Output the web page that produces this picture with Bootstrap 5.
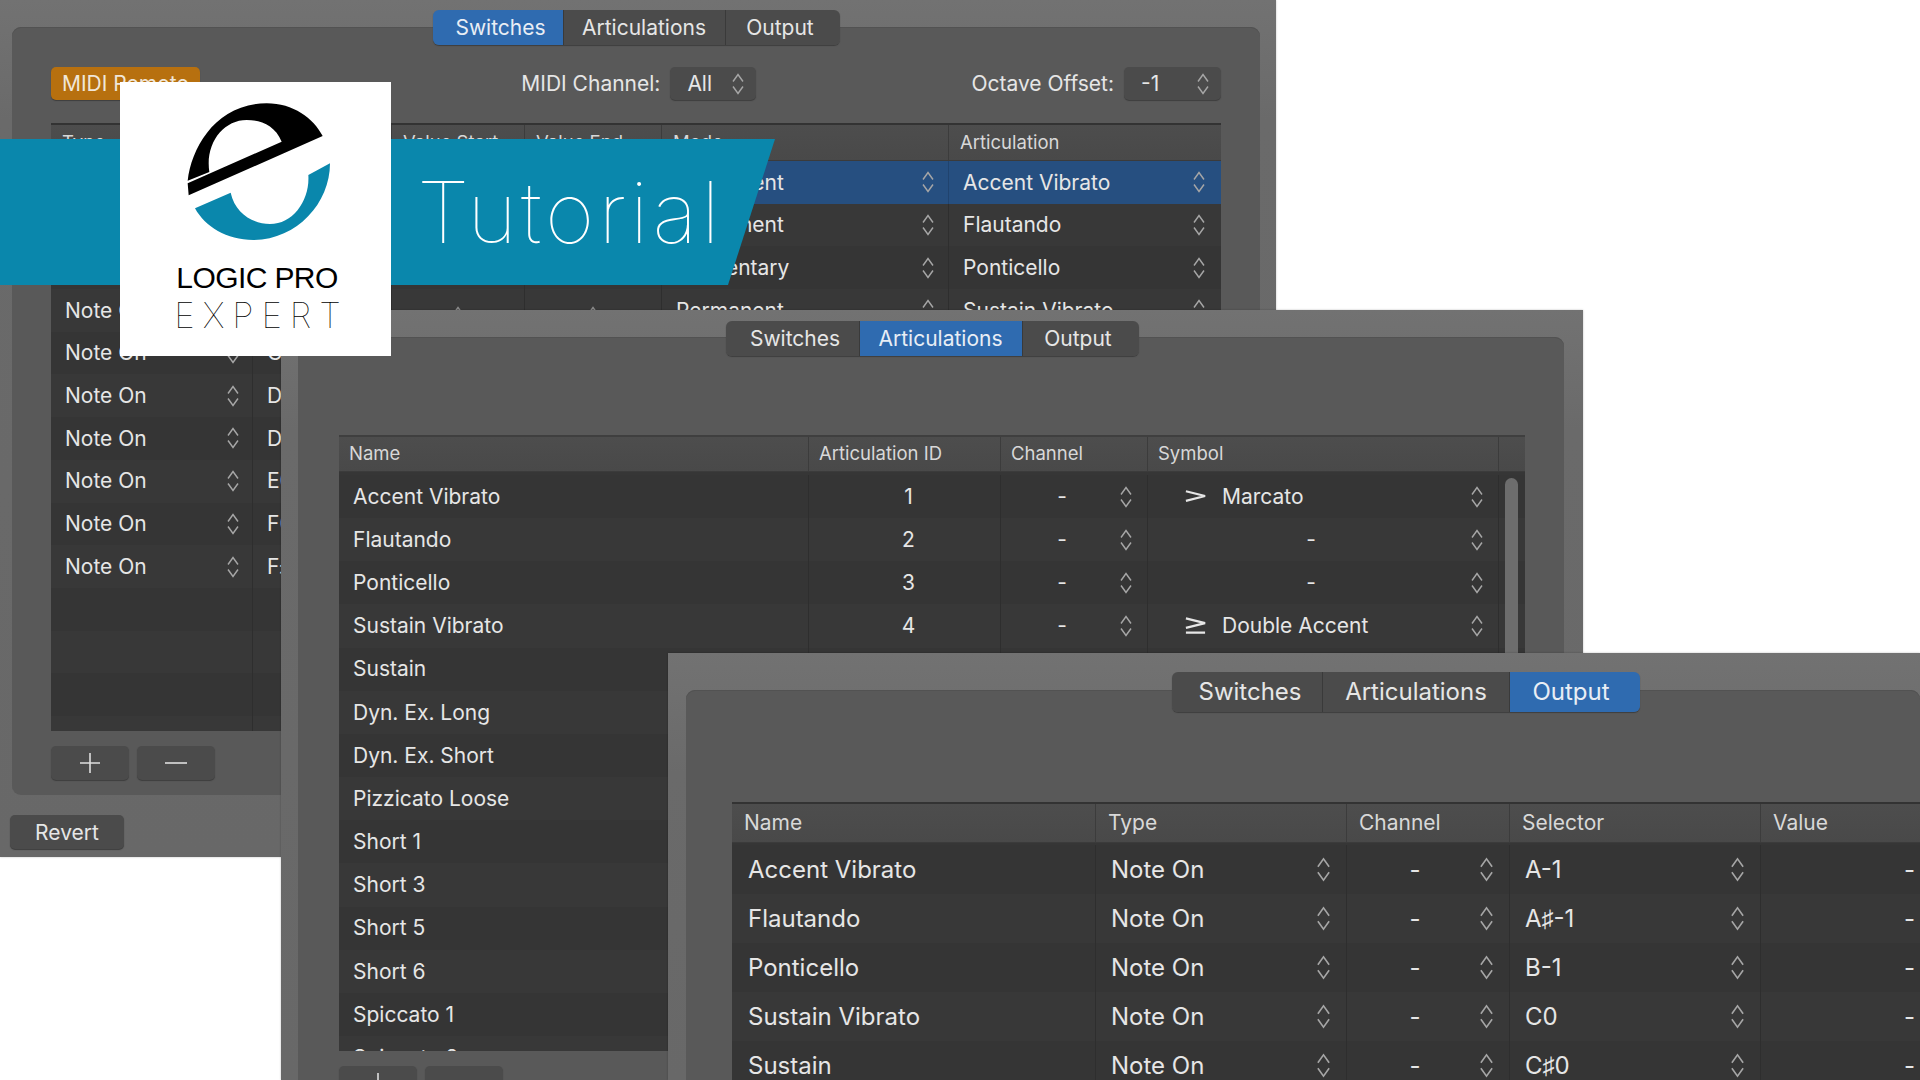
<!DOCTYPE html>
<html lang="en">
<head>
<meta charset="utf-8">
<title>Logic Pro Expert Tutorial</title>
<link href="https://cdn.jsdelivr.net/npm/bootstrap@5.3.0/dist/css/bootstrap.min.css" rel="stylesheet">
<style>
html,body{margin:0;height:100%;background:#fff;overflow:hidden}
body{font-family:Inter,"Liberation Sans",sans-serif;color:#e6e6e6}
.stage{position:relative;width:1920px;height:1080px;overflow:hidden}
.win{position:absolute;overflow:hidden;background:linear-gradient(#727272,#6a6a6a 120px,#686868);box-shadow:0 0 2px rgba(0,0,0,.25)}
.win-a{left:0;top:0;width:1276px;height:857px;z-index:1;padding:27px 16px 0 12px}
.win-b{left:281px;top:310px;width:1302px;height:770px;z-index:2;padding:27px 19px 0 17px}
.win-c{left:668px;top:653px;width:1252px;height:427px;z-index:3;padding:37px 0 0 18px}
.pane{background:#595959;border-radius:9px 9px 0 0;box-shadow:inset 0 1px 0 #525252}
.win-a .pane{height:768px;border-radius:9px;padding:0 39px}
.win-b .pane{height:800px;padding:0 39px 0 41px}
.win-c .pane{height:480px;padding:0 0 0 46px}
.tabset{box-shadow:0 1px 1px #3d3d3d;border-radius:6px}
.tabset .btn{background:#4b4b4b;border:0;border-right:1px solid #3a3a3a;color:#e6e6e6;font-size:21px;line-height:1;border-radius:0;padding:0;height:35px;display:flex;align-items:center;justify-content:center}
.btn-group.tabset>.btn+.btn{margin-left:0}
.tabset .btn:first-child{border-radius:6px 0 0 6px;padding-left:6px}
.tabset .btn:last-child{border-radius:0 6px 6px 0;border-right:0;padding-right:5px}
.tabset .btn.on{background:#2f6bb0;color:#e9eef5}
.tabset-a{margin-top:-17px;margin-bottom:22px}
.tabset-a .btn:nth-child(1){width:131px}.tabset-a .btn:nth-child(2){width:162px}.tabset-a .btn:nth-child(3){width:114px}
.tabset-b{margin-top:-16px;margin-bottom:79px}
.tabset-b .btn:nth-child(1){width:134px}.tabset-b .btn:nth-child(2){width:163px}.tabset-b .btn:nth-child(3){width:116px}
.tabset-c{margin:-18px 0 90px 440px}
.tabset-c .btn{height:40px;font-size:24px}
.tabset-c .btn:nth-child(1){width:151px}.tabset-c .btn:nth-child(2){width:187px}.tabset-c .btn:nth-child(3){width:130px}
.tabset-c .btn:last-child{padding-right:8px}
.control-row{height:33px;margin-bottom:23px}
.remote-btn{width:149px;height:33px;background:#b7700f;color:#f0e6d8;border:0;border-radius:5px;font-size:21px;padding:0 0 0 11px;text-align:left;line-height:1;box-shadow:0 1px 1px #3d3d3d}
.ctl-label{font-size:21px;margin-right:10px}
.pick{height:33px;background:#4b4b4b;color:#e6e6e6;border:0;border-radius:5px;font-size:21px;padding:0 11px 0 17px;line-height:1;box-shadow:0 1px 1px #3d3d3d;display:flex;align-items:center;justify-content:space-between}
.pick-ch{width:86px;margin-right:215px}
.pick-oct{width:97px}
.grid-a{width:1170px;height:608px;background:#363636;border-top:2px solid #333}
.grid-b{width:1186px;height:616px;background:#363636;border-top:2px solid #3f3f3f}
.grid-c{width:1300px;height:400px;background:#363636;border-top:2px solid #333}
.head,.line{display:grid}
.head{background:linear-gradient(#4d4d4d,#494949);color:#d8d8d8;font-size:18.5px;border-bottom:1px solid #3b3b3b}
.grid-a .head{height:36px}.grid-b .head{height:35px}.grid-c .head{height:39px;font-size:21px}
.grid-a .head,.grid-a .line{grid-template-columns:202px 139px 133px 137px 287px 272px}
.grid-b .head,.grid-b .line{grid-template-columns:470px 192px 147px 351px 26px}
.grid-c .head,.grid-c .line{grid-template-columns:364px 251px 163px 251px 271px}
.head>div{display:flex;align-items:center;border-right:1px solid #3c3c3c;padding-left:10px}
.head>div:last-child{border-right:0}
.grid-a .head>div{padding-left:11px}
.grid-c .head>div{padding-left:12px}
.line{font-size:21px}
.grid-a .line{height:42.7px}.grid-b .line{height:43.17px}.grid-c .line{height:49px;font-size:24px}
.line:nth-child(even){background:#383838}
.line:nth-child(odd){background:#353535}
.line.sel{background:#264f80}
.line>div{display:flex;align-items:center;min-width:0;white-space:nowrap;border-right:1px solid #2e2e2e;padding:0 13px 0 14px}
.line>div:last-child{border-right:0}
.line.sel>div{border-right-color:#20436e}
.grid-a .line>div:first-child{padding-right:12px}
.grid-a .line>div:last-child{padding-right:15px}
.grid-b .body{padding-top:3px}
.grid-c .body{padding-top:2px}
.grid-a .body{height:570px;overflow:hidden;background:#363636}
.grid-b .body{position:relative;height:579px;overflow:hidden;background:#363636}
.grid-b .line>div{padding:0 14px 0 14px}
.grid-c .line>div{padding:0 14px 0 15px}
.grid-c .line>div:first-child{padding-left:16px}
.grow{flex:1 1 auto;text-align:center}
.dash-shift{padding-right:10px}
.grid-b .line>div:nth-child(2){justify-content:center;padding-left:8px;padding-right:0}
.dash-val{margin-left:128px}
.updown{flex:none;width:14px;height:24px;margin-left:auto;fill:none;stroke:#a6a6a6;stroke-width:1.45}
.grid-c .updown{width:17px;height:27px}
.pick .updown{width:14px;height:24px}
.line>.tip-cell{padding:0;justify-content:center;overflow:hidden}
.tip-cell .updown{margin:14px 0 0;stroke:#8a8a8a}
.sym{flex:none;width:23px;height:18px;margin:0 15px 0 22px;fill:none;stroke:#e6e6e6;stroke-width:2.3}
.thumb{position:absolute;right:7px;top:6px;width:13px;height:600px;border-radius:7px;background:#6d6d6d}
.foot-btn{width:78px;height:34px;background:#4b4b4b;border:0;border-radius:5px;color:#dedede;padding:0;line-height:1;box-shadow:0 1px 1px #3d3d3d;display:flex;align-items:center;justify-content:center}
.foot-btn svg{width:24px;height:24px;stroke:#dedede;stroke-width:1.6;fill:none}
.foot-row{margin-top:15px;gap:8px}
.revert-btn{width:114px;height:34px;background:#4b4b4b;border:0;border-radius:5px;color:#e6e6e6;font-size:21px;padding:0;line-height:1;margin:20px 0 0 -2px;box-shadow:0 1px 1px #3d3d3d}
.banner{position:absolute;left:0;top:139px;width:775px;height:146px;background:#0a87ac;clip-path:polygon(0 0,100% 0,728px 100%,0 100%);z-index:4;display:flex;align-items:center;padding:0 0 0 417px;color:#fff;font-size:85px;font-weight:100;line-height:1;letter-spacing:4.1px}
.brand{position:absolute;left:120px;top:82px;width:271px;height:274px;background:#fff;z-index:5}
.brand svg{position:absolute;left:0;top:0;width:271px;height:274px}
.brand-text{position:absolute;left:0;right:0;top:181px;text-align:center;color:#000;line-height:1}
.brand-main{font-family:"Liberation Sans",sans-serif;font-size:30px;letter-spacing:-.6px;height:35px;padding-left:3px}
.brand-sub{font-family:Inter,sans-serif;font-weight:100;font-size:35px;letter-spacing:7.9px;padding-left:12px}
</style>
</head>
<body>
<svg width="0" height="0" class="position-absolute"><defs>
<symbol id="ud" viewBox="0 0 14 24"><path d="M2 9.5 7 2.5l5 7M2 14.5l5 7 5-7"/></symbol>
</defs></svg>
<div class="stage">

<section class="win win-a">
  <div class="pane">
    <div class="d-flex justify-content-center">
      <div class="btn-group tabset tabset-a"><button class="btn on">Switches</button><button class="btn">Articulations</button><button class="btn">Output</button></div>
    </div>
    <div class="d-flex align-items-center control-row">
      <button class="btn remote-btn">MIDI Remote</button>
      <div class="ms-auto d-flex align-items-center">
        <span class="ctl-label">MIDI Channel:</span>
        <div class="pick pick-ch">All<svg class="updown"><use href="#ud"/></svg></div>
        <span class="ctl-label">Octave Offset:</span>
        <div class="pick pick-oct">-1<svg class="updown"><use href="#ud"/></svg></div>
      </div>
    </div>
    <div class="grid-a">
      <div class="head"><div>Type</div><div></div><div>Value Start</div><div>Value End</div><div>Mode</div><div>Articulation</div></div>
      <div class="body">
        <div class="line sel"><div>Note On<svg class="updown"><use href="#ud"/></svg></div><div>A-1</div><div></div><div></div><div>Permanent<svg class="updown"><use href="#ud"/></svg></div><div>Accent Vibrato<svg class="updown"><use href="#ud"/></svg></div></div>
        <div class="line"><div>Note On<svg class="updown"><use href="#ud"/></svg></div><div>A♯-1</div><div></div><div></div><div>Permanent<svg class="updown"><use href="#ud"/></svg></div><div>Flautando<svg class="updown"><use href="#ud"/></svg></div></div>
        <div class="line"><div>Note On<svg class="updown"><use href="#ud"/></svg></div><div>B-1</div><div></div><div></div><div>Momentary<svg class="updown"><use href="#ud"/></svg></div><div>Ponticello<svg class="updown"><use href="#ud"/></svg></div></div>
        <div class="line"><div>Note On<svg class="updown"><use href="#ud"/></svg></div><div>C0</div><div class="tip-cell"><svg class="updown"><use href="#ud"/></svg></div><div class="tip-cell"><svg class="updown"><use href="#ud"/></svg></div><div>Permanent<svg class="updown"><use href="#ud"/></svg></div><div>Sustain Vibrato<svg class="updown"><use href="#ud"/></svg></div></div>
        <div class="line"><div>Note On<svg class="updown"><use href="#ud"/></svg></div><div>C♯0</div><div></div><div></div><div></div><div></div></div>
        <div class="line"><div>Note On<svg class="updown"><use href="#ud"/></svg></div><div>D0</div><div></div><div></div><div></div><div></div></div>
        <div class="line"><div>Note On<svg class="updown"><use href="#ud"/></svg></div><div>D♯0</div><div></div><div></div><div></div><div></div></div>
        <div class="line"><div>Note On<svg class="updown"><use href="#ud"/></svg></div><div>E0</div><div></div><div></div><div></div><div></div></div>
        <div class="line"><div>Note On<svg class="updown"><use href="#ud"/></svg></div><div>F0</div><div></div><div></div><div></div><div></div></div>
        <div class="line"><div>Note On<svg class="updown"><use href="#ud"/></svg></div><div>F♯0</div><div></div><div></div><div></div><div></div></div>
        <div class="line"><div></div><div></div><div></div><div></div><div></div><div></div></div>
        <div class="line"><div></div><div></div><div></div><div></div><div></div><div></div></div>
        <div class="line"><div></div><div></div><div></div><div></div><div></div><div></div></div>
        <div class="line"><div></div><div></div><div></div><div></div><div></div><div></div></div>
      </div>
    </div>
    <div class="d-flex foot-row">
      <button class="btn foot-btn" aria-label="Add"><svg viewBox="0 0 24 24"><path d="M12 2v20M2 12h20"/></svg></button>
      <button class="btn foot-btn" aria-label="Remove"><svg viewBox="0 0 24 24"><path d="M1 12h22"/></svg></button>
    </div>
  </div>
  <button class="btn revert-btn">Revert</button>
</section>

<section class="win win-b">
  <div class="pane">
    <div class="d-flex justify-content-center">
      <div class="btn-group tabset tabset-b"><button class="btn">Switches</button><button class="btn on">Articulations</button><button class="btn">Output</button></div>
    </div>
    <div class="grid-b">
      <div class="head"><div>Name</div><div>Articulation ID</div><div>Channel</div><div>Symbol</div><div></div></div>
      <div class="body">
        <div class="line"><div>Accent Vibrato</div><div>1</div><div><span class="grow dash-shift">-</span><svg class="updown"><use href="#ud"/></svg></div><div><svg class="sym" viewBox="0 0 24 18"><path d="M2 3 22 8 2 13"/></svg>Marcato<svg class="updown"><use href="#ud"/></svg></div><div></div></div>
        <div class="line"><div>Flautando</div><div>2</div><div><span class="grow dash-shift">-</span><svg class="updown"><use href="#ud"/></svg></div><div><span class="grow dash-shift">-</span><svg class="updown"><use href="#ud"/></svg></div><div></div></div>
        <div class="line"><div>Ponticello</div><div>3</div><div><span class="grow dash-shift">-</span><svg class="updown"><use href="#ud"/></svg></div><div><span class="grow dash-shift">-</span><svg class="updown"><use href="#ud"/></svg></div><div></div></div>
        <div class="line"><div>Sustain Vibrato</div><div>4</div><div><span class="grow dash-shift">-</span><svg class="updown"><use href="#ud"/></svg></div><div><svg class="sym" viewBox="0 0 24 18"><path d="M2 1 22 6 2 11M2 16h20"/></svg>Double Accent<svg class="updown"><use href="#ud"/></svg></div><div></div></div>
        <div class="line"><div>Sustain</div><div></div><div></div><div></div><div></div></div>
        <div class="line"><div>Dyn. Ex. Long</div><div></div><div></div><div></div><div></div></div>
        <div class="line"><div>Dyn. Ex. Short</div><div></div><div></div><div></div><div></div></div>
        <div class="line"><div>Pizzicato Loose</div><div></div><div></div><div></div><div></div></div>
        <div class="line"><div>Short 1</div><div></div><div></div><div></div><div></div></div>
        <div class="line"><div>Short 3</div><div></div><div></div><div></div><div></div></div>
        <div class="line"><div>Short 5</div><div></div><div></div><div></div><div></div></div>
        <div class="line"><div>Short 6</div><div></div><div></div><div></div><div></div></div>
        <div class="line"><div>Spiccato 1</div><div></div><div></div><div></div><div></div></div>
        <div class="line"><div>Spiccato 2</div><div></div><div></div><div></div><div></div></div>
        <div class="thumb"></div>
      </div>
    </div>
    <div class="d-flex foot-row">
      <button class="btn foot-btn" aria-label="Add"><svg viewBox="0 0 24 24"><path d="M12 2v20M2 12h20"/></svg></button>
      <button class="btn foot-btn" aria-label="Remove"><svg viewBox="0 0 24 24"><path d="M1 12h22"/></svg></button>
    </div>
  </div>
</section>

<section class="win win-c">
  <div class="pane">
    <div class="btn-group tabset tabset-c"><button class="btn">Switches</button><button class="btn">Articulations</button><button class="btn on">Output</button></div>
    <div class="grid-c">
      <div class="head"><div>Name</div><div>Type</div><div>Channel</div><div>Selector</div><div>Value</div></div>
      <div class="body">
        <div class="line"><div>Accent Vibrato</div><div>Note On<svg class="updown"><use href="#ud"/></svg></div><div><span class="grow dash-shift">-</span><svg class="updown"><use href="#ud"/></svg></div><div>A-1<svg class="updown"><use href="#ud"/></svg></div><div><span class="dash-val">-</span></div></div>
        <div class="line"><div>Flautando</div><div>Note On<svg class="updown"><use href="#ud"/></svg></div><div><span class="grow dash-shift">-</span><svg class="updown"><use href="#ud"/></svg></div><div>A♯-1<svg class="updown"><use href="#ud"/></svg></div><div><span class="dash-val">-</span></div></div>
        <div class="line"><div>Ponticello</div><div>Note On<svg class="updown"><use href="#ud"/></svg></div><div><span class="grow dash-shift">-</span><svg class="updown"><use href="#ud"/></svg></div><div>B-1<svg class="updown"><use href="#ud"/></svg></div><div><span class="dash-val">-</span></div></div>
        <div class="line"><div>Sustain Vibrato</div><div>Note On<svg class="updown"><use href="#ud"/></svg></div><div><span class="grow dash-shift">-</span><svg class="updown"><use href="#ud"/></svg></div><div>C0<svg class="updown"><use href="#ud"/></svg></div><div><span class="dash-val">-</span></div></div>
        <div class="line"><div>Sustain</div><div>Note On<svg class="updown"><use href="#ud"/></svg></div><div><span class="grow dash-shift">-</span><svg class="updown"><use href="#ud"/></svg></div><div>C♯0<svg class="updown"><use href="#ud"/></svg></div><div><span class="dash-val">-</span></div></div>
      </div>
    </div>
  </div>
</section>

<div class="banner">Tutorial</div>
<div class="brand">
  <svg viewBox="30 36 813 822" aria-hidden="true">
    <path fill="#000" d="M233 332C245 230 320 100 470 100C550 100 610 145 638 198L236 376L233 340L515 215C495 165 450 150 410 150C340 150 285 220 298 306Z"/>
    <path fill="#0a87ac" d="M255 415L362 368C375 430 430 462 480 462C550 462 600 390 595 315L660 280C660 400 560 510 430 510C350 510 285 470 255 415Z"/>
  </svg>
  <div class="brand-text"><div class="brand-main">LOGIC PRO</div><div class="brand-sub">EXPERT</div></div>
</div>
</div>
<script src="https://cdn.jsdelivr.net/npm/bootstrap@5.3.0/dist/js/bootstrap.bundle.min.js"></script>
</body>
</html>
